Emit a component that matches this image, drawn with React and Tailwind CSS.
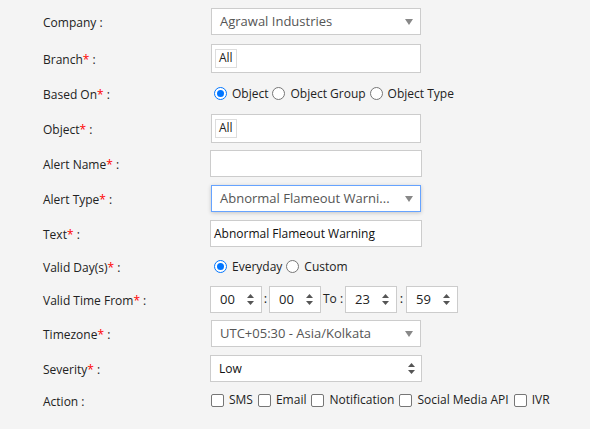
// Alert settings form
const FONT = { fontFamily: '"Open Sans", "Noto Sans", Arial, sans-serif' };

function Label({ text, req }) {
  return (
    <div className="w-[168px] shrink-0 pl-[43px] pt-[3px] text-[12px] text-[#222]">
      {text}
      {req && <span className="text-[#ff0000]">*</span>} :
    </div>
  );
}

function Row({ h, children }) {
  return <div className={`flex items-center ${h}`}>{children}</div>;
}

function Caret() {
  return (
    <svg width="8" height="6" viewBox="0 0 8 6" className="shrink-0">
      <path d="M0 0h8L4 6z" fill="#888" />
    </svg>
  );
}

function Spin() {
  return (
    <svg width="7" height="11" viewBox="0 0 7 11" className="shrink-0">
      <path d="M3.5 0L7 4H0z M0 7h7l-3.5 4z" fill="#555" />
    </svg>
  );
}

function Radio({ checked, label }) {
  return (
    <span className="flex items-center gap-[5px] mr-[4px]">
      {checked ? (
        <span className="w-[13px] h-[13px] rounded-full border-[1.5px] border-[#0075ff] flex items-center justify-center bg-white">
          <span className="w-[7px] h-[7px] rounded-full bg-[#0075ff]" />
        </span>
      ) : (
        <span className="w-[13px] h-[13px] rounded-full border border-[#767676] bg-white" />
      )}
      <span>{label}</span>
    </span>
  );
}

function Check({ label }) {
  return (
    <span className="flex items-center gap-[5px] mr-[5px]">
      <span className="w-[13px] h-[13px] rounded-[2px] border border-[#767676] bg-white" />
      <span>{label}</span>
    </span>
  );
}

function TimeBox({ value }) {
  return (
    <div className="w-[52px] h-[27px] bg-white border border-[#ccc] flex items-center justify-between pl-[9px] pr-[7px] pt-[1px]">
      <span>{value}</span>
      <Spin />
    </div>
  );
}

export default function App() {
  return (
    <div className="w-[590px] h-[429px] bg-[#f4f4f4] pt-[3px] text-[12px] text-[#222]" style={FONT}>
      <Row h="h-[37px]">
        <Label text="Company" />
        <div className="ml-[43px] w-[210px] h-[27px] bg-white border border-[#ccc] flex items-center justify-between pl-[8px] pr-[7px] pt-[1px] text-[#555] text-[13px]">
          <span>Agrawal Industries</span>
          <Caret />
        </div>
      </Row>
      <Row h="h-[36px]">
        <Label text="Branch" req />
        <div className="ml-[43px] w-[210px] h-[29px] bg-white border border-[#ccc] flex items-center pl-[3px]">
          <span className="border border-[#ddd] px-[3px] h-[19px] flex items-center">All</span>
        </div>
      </Row>
      <Row h="h-[35px]">
        <Label text="Based On" req />
        <div className="ml-[46px] flex items-center text-[12px]">
          <Radio checked label="Object" />
          <Radio label="Object Group" />
          <Radio label="Object Type" />
        </div>
      </Row>
      <Row h="h-[34px]">
        <Label text="Object" req />
        <div className="ml-[43px] w-[210px] h-[29px] bg-white border border-[#ccc] flex items-center pl-[3px]">
          <span className="border border-[#ddd] px-[3px] h-[19px] flex items-center">All</span>
        </div>
      </Row>
      <Row h="h-[36px]">
        <Label text="Alert Name" req />
        <div className="ml-[42px] w-[212px] h-[27px] bg-white border border-[#ccc]" />
      </Row>
      <Row h="h-[35px]">
        <Label text="Alert Type" req />
        <div className="ml-[43px] w-[210px] h-[27px] bg-white border border-[#66a3ff] shadow-[0_1px_4px_rgba(0,0,0,0.2)] flex items-center justify-between pl-[8px] pr-[7px] pt-[1px] text-[#555] text-[13px]">
          <span>Abnormal Flameout Warni...</span>
          <Caret />
        </div>
      </Row>
      <Row h="h-[34px]">
        <Label text="Text" req />
        <div className="ml-[42px] w-[212px] h-[27px] bg-white border border-[#ccc] flex items-center pl-[3px] pt-[1px] text-[12px] text-[#111]">
          Abnormal Flameout Warning
        </div>
      </Row>
      <Row h="h-[33px]">
        <Label text="Valid Day(s)" req />
        <div className="ml-[46px] flex items-center text-[12px]">
          <Radio checked label="Everyday" />
          <Radio label="Custom" />
        </div>
      </Row>
      <Row h="h-[32px]">
        <Label text="Valid Time From" req />
        <div className="ml-[42px] flex items-center text-[13px]">
          <TimeBox value="00" />
          <span className="w-[7px] text-center">:</span>
          <TimeBox value="00" />
          <span className="w-[24px] text-center text-[12px]">To :</span>
          <TimeBox value="23" />
          <span className="w-[9px] text-center">:</span>
          <TimeBox value="59" />
        </div>
      </Row>
      <Row h="h-[36px]">
        <Label text="Timezone" req />
        <div className="ml-[43px] w-[210px] h-[27px] bg-white border border-[#ccc] flex items-center justify-between pl-[8px] pr-[7px] pt-[1px] text-[#555] text-[13px]">
          <span>UTC+05:30 - Asia/Kolkata</span>
          <Caret />
        </div>
      </Row>
      <Row h="h-[34px]">
        <Label text="Severity" req />
        <div className="ml-[42px] w-[212px] h-[27px] bg-white border border-[#ccc] flex items-center justify-between pl-[8px] pr-[6px] pt-[1px] text-[#111] text-[12px]">
          <span>Low</span>
          <Spin />
        </div>
      </Row>
      <Row h="h-[30px]">
        <Label text="Action" />
        <div className="ml-[43px] flex items-center text-[12px]">
          <Check label="SMS" />
          <Check label="Email" />
          <Check label="Notification" />
          <Check label="Social Media API" />
          <Check label="IVR" />
        </div>
      </Row>
    </div>
  );
}
